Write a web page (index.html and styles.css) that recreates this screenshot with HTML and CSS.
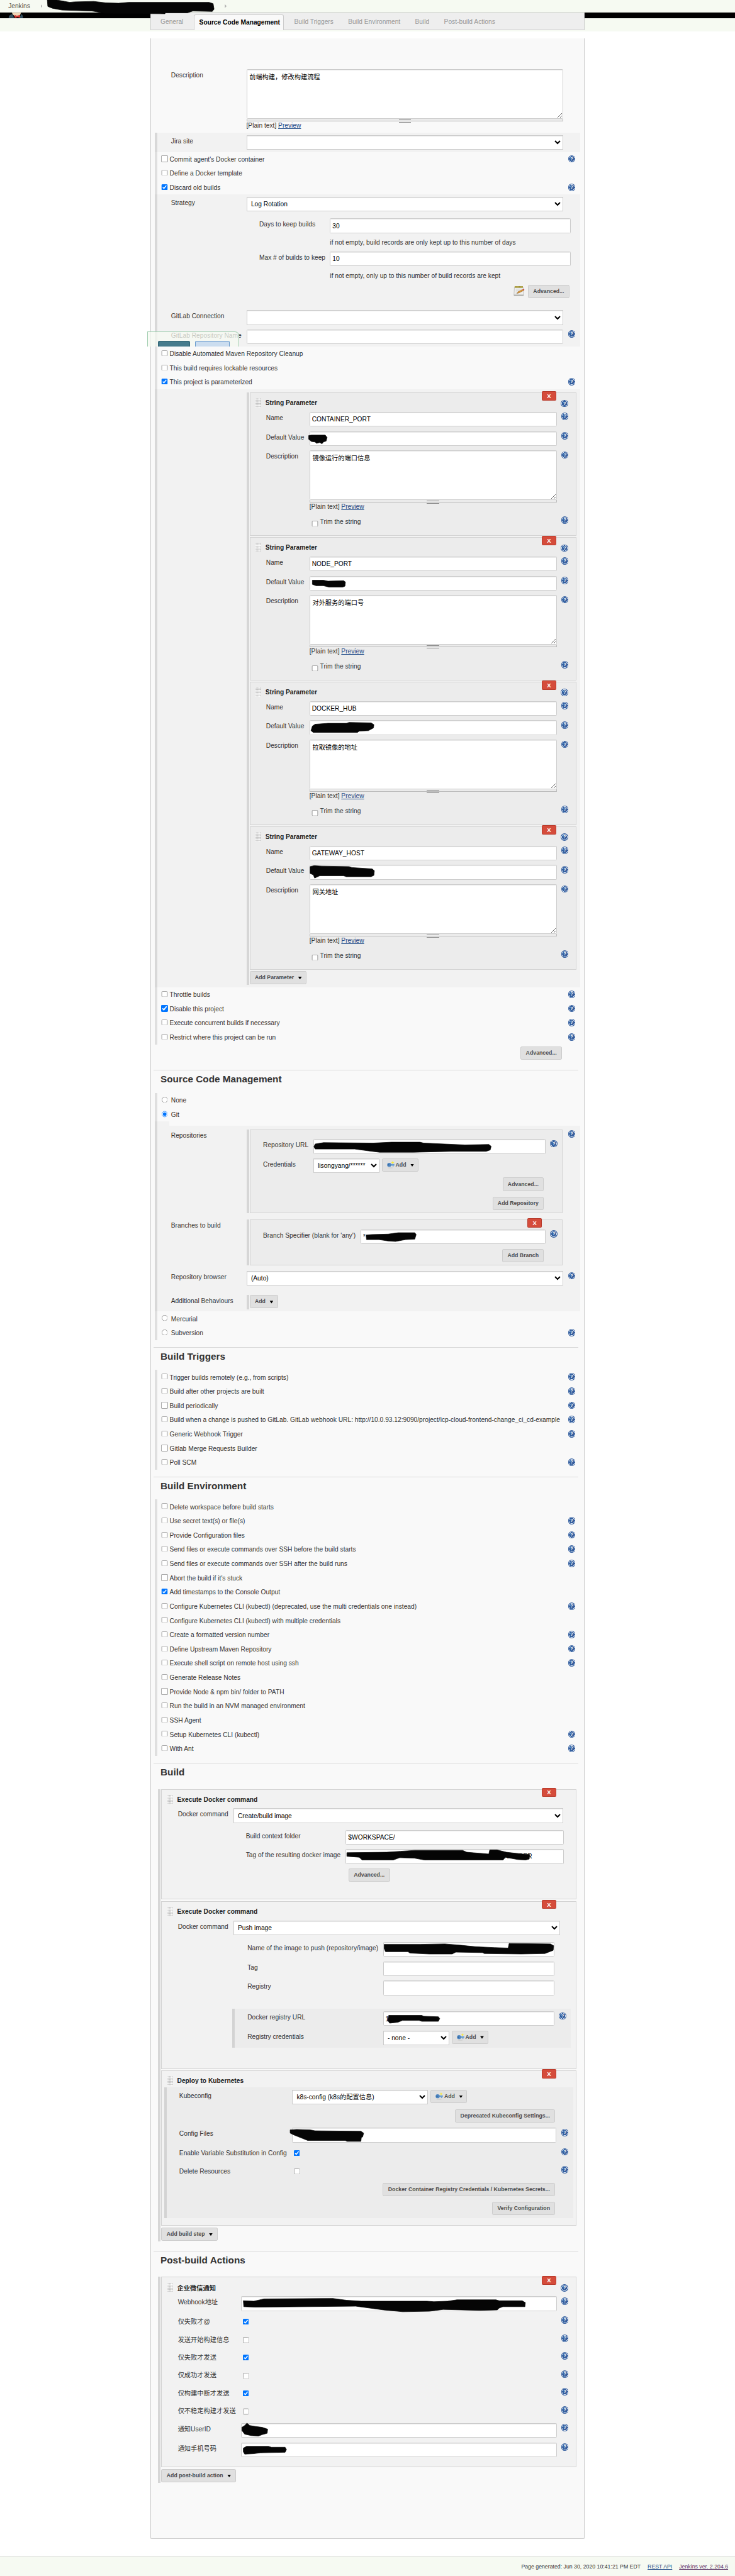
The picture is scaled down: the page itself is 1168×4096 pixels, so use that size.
FILE: index.html
```html
<!DOCTYPE html>
<html lang="en">
<head>
<meta charset="utf-8">
<title>Config [Jenkins]</title>
<link rel="stylesheet" href="styles.css">
</head>
<body>
<svg width="0" height="0" class="defs">
  <symbol id="key" viewBox="0 0 18 18">
    <ellipse cx="8" cy="16" rx="6" ry="1.2" fill="#cfcfcf"/>
    <path d="M8 7h9v4h-2v2h-2v-2H8z" fill="#6d9fd0"/>
    <circle cx="5" cy="9" r="4.6" fill="#4f86c0"/>
    <circle cx="3.6" cy="9" r="1.3" fill="#2d5f99"/>
    <path d="M13 0l1.200 2.600 2.800.9-2.800 1.200L13 7.500l-1.200-2.800-2.800-1.200 2.800-.9z" fill="#f7ea3c"/>
  </symbol>
</svg>
<div class="page">
  <header class="crumbs"><a>Jenkins</a><i class="sep"></i>
    <svg class="ink" width="600" height="32"><path d="M103 0L124 0L152 5L162 4L204 3L230 6L258 7L280 5L455 5L464 8L466 20L462 25L420 24L408 28L360 28L359 30L230 29L200 24L135 22L114 18L104 14Z"/></svg>
    <i class="sep sep2"></i>
  </header>
  <div class="band">
    <svg class="butler" width="34" height="12"><path d="M8 0h20l-2 5-4 3h-8l-4-4z" fill="#f0d6b7"/><path d="M1 12q0-7 8-9l4 9z" fill="#335061"/><path d="M32 12q1-5-3-9l-5 9z" fill="#335061"/><path d="M14 5l5 2 7-2v6l-6-1-6 2z" fill="#d33833"/></svg>
    <nav class="tabs"><a>General</a><a class="on">Source Code Management</a><a>Build Triggers</a><a>Build Environment</a><a>Build</a><a>Post-build Actions</a></nav>
  </div>

  <main class="panel">
    <div class="main plain">
      <div class="row desc"><span class="lbl">Description</span><div class="ctl"><textarea>前端构建，修改构建流程</textarea><div class="drag"></div><div class="plaintext">[Plain text] <a>Preview</a></div></div></div>
    </div>
    <div class="striped">
      <div class="body main">
        <div class="row"><span class="lbl">Jira site</span><div class="ctl"><select></select></div></div>
      </div>
      <div class="check"><input type="checkbox">Commit agent's Docker container<i class="help"></i></div>
      <div class="check"><input type="checkbox">Define a Docker template</div>
      <div class="check"><input type="checkbox" checked>Discard old builds<i class="help"></i></div>
      <div class="body main">
        <div class="row"><span class="lbl">Strategy</span><div class="ctl"><select><option>Log Rotation</option></select></div></div>
        <div class="rotation">
          <div class="row"><span class="lbl">Days to keep builds</span><div class="ctl"><input type="text" value="30"></div></div>
          <div class="hint">if not empty, build records are only kept up to this number of days</div>
          <div class="row"><span class="lbl">Max # of builds to keep</span><div class="ctl"><input type="text" value="10"></div></div>
          <div class="hint">if not empty, only up to this number of build records are kept</div>
        </div>
        <div class="actions adv1">
          <svg width="24" height="24" viewBox="0 0 24 24"><path d="M2 4h19l1 17H1z" fill="#efefed" stroke="#b5b5b0"/><path d="M1 20h21v2.500H1z" fill="#a8a8a4"/><path d="M2.500 1.500h18v3.500h-18z" fill="#b5a642"/><path d="M4 2v2M7 2v2M10 2v2M13 2v2M16 2v2M19 2v2" stroke="#6e6420"/><path d="M5 8h13M5 11h8M5 14h6M5 17h5" stroke="#c4c4c4"/><path d="M8 17l2-3.500L20 8.500l2 2.500-10 5z" fill="#dd9a3c" stroke="#8a5a1a" stroke-width=".7"/><path d="M20 8.500l2.500-1.200 1.300 2.200-1.800 1.500z" fill="#d43c3c"/></svg>
          <button>Advanced...</button>
        </div>
        <div class="row"><span class="lbl">GitLab Connection</span><div class="ctl"><select></select></div></div>
        <div class="row"><span class="lbl">GitLab Repository Name</span><div class="ctl"><input type="text"></div><i class="help"></i></div>
        <div class="savebar"><b></b><b class="apply"></b></div>
      </div>
      <div class="check"><input type="checkbox">Disable Automated Maven Repository Cleanup</div>
      <div class="check"><input type="checkbox">This build requires lockable resources</div>
      <div class="check"><input type="checkbox" checked>This project is parameterized<i class="help"></i></div>
      <div class="body">
        <div class="repeat params">
          <section class="chunk">
            <button class="del">X</button>
            <div class="head"><i class="grip"></i><b>String Parameter</b><i class="help"></i></div>
            <div class="row"><span class="lbl">Name</span><div class="ctl"><input type="text" value="CONTAINER_PORT"></div><i class="help"></i></div>
            <div class="row"><span class="lbl">Default Value</span><div class="ctl"><input type="text"><svg class="ink" width="60" height="32"><path d="M-2 9L4 8L34 8L38 13L36 21L30 23L27 27L22 24L15 26L12 23L4 22L-2 17Z"/></svg></div><i class="help"></i></div>
            <div class="row desc"><span class="lbl">Description</span><div class="ctl"><textarea>镜像运行的端口信息</textarea><div class="drag"></div><div class="plaintext">[Plain text] <a>Preview</a></div></div><i class="help"></i></div>
            <div class="row trim"><span class="lbl"></span><div class="ctl"><input type="checkbox">Trim the string</div><i class="help"></i></div>
          </section>
          <section class="chunk">
            <button class="del">X</button>
            <div class="head"><i class="grip"></i><b>String Parameter</b><i class="help"></i></div>
            <div class="row"><span class="lbl">Name</span><div class="ctl"><input type="text" value="NODE_PORT"></div><i class="help"></i></div>
            <div class="row"><span class="lbl">Default Value</span><div class="ctl"><input type="text"><svg class="ink" width="100" height="32"><path d="M6 9L30 9L40 11L74 10L78 13L77 22L72 24L42 24L30 21L14 21L6 18Z"/></svg></div><i class="help"></i></div>
            <div class="row desc"><span class="lbl">Description</span><div class="ctl"><textarea>对外服务的端口号</textarea><div class="drag"></div><div class="plaintext">[Plain text] <a>Preview</a></div></div><i class="help"></i></div>
            <div class="row trim"><span class="lbl"></span><div class="ctl"><input type="checkbox">Trim the string</div><i class="help"></i></div>
          </section>
          <section class="chunk">
            <button class="del">X</button>
            <div class="head"><i class="grip"></i><b>String Parameter</b><i class="help"></i></div>
            <div class="row"><span class="lbl">Name</span><div class="ctl"><input type="text" value="DOCKER_HUB"></div><i class="help"></i></div>
            <div class="row"><span class="lbl">Default Value</span><div class="ctl"><input type="text"><svg class="ink" width="160" height="32"><path d="M6 13L12 9L40 7L80 7L86 5L134 6L140 10L139 17L128 23L108 24L104 27L8 27L3 23Z"/></svg></div><i class="help"></i></div>
            <div class="row desc"><span class="lbl">Description</span><div class="ctl"><textarea>拉取镜像的地址</textarea><div class="drag"></div><div class="plaintext">[Plain text] <a>Preview</a></div></div><i class="help"></i></div>
            <div class="row trim"><span class="lbl"></span><div class="ctl"><input type="checkbox">Trim the string</div><i class="help"></i></div>
          </section>
          <section class="chunk">
            <button class="del">X</button>
            <div class="head"><i class="grip"></i><b>String Parameter</b><i class="help"></i></div>
            <div class="row"><span class="lbl">Name</span><div class="ctl"><input type="text" value="GATEWAY_HOST"></div><i class="help"></i></div>
            <div class="row"><span class="lbl">Default Value</span><div class="ctl"><input type="text"><svg class="ink" width="160" height="32"><path d="M1 4L10 2L26 3L86 4L92 6L136 9L141 13L140 23L134 26L80 26L74 24L22 24L11 29L8 22L1 19Z"/></svg></div><i class="help"></i></div>
            <div class="row desc"><span class="lbl">Description</span><div class="ctl"><textarea>网关地址</textarea><div class="drag"></div><div class="plaintext">[Plain text] <a>Preview</a></div></div><i class="help"></i></div>
            <div class="row trim"><span class="lbl"></span><div class="ctl"><input type="checkbox">Trim the string</div><i class="help"></i></div>
          </section>
          <button>Add Parameter<i class="caret"></i></button>
        </div>
      </div>
      <div class="check"><input type="checkbox">Throttle builds<i class="help"></i></div>
      <div class="check"><input type="checkbox" checked>Disable this project<i class="help"></i></div>
      <div class="check"><input type="checkbox">Execute concurrent builds if necessary<i class="help"></i></div>
      <div class="check"><input type="checkbox">Restrict where this project can be run<i class="help"></i></div>
    </div>
    <div class="actions adv2"><button>Advanced...</button></div>

    <h2>Source Code Management</h2>
    <div class="striped">
      <div class="check radio"><input type="radio" name="scm">None</div>
      <div class="check radio"><input type="radio" name="scm" checked>Git</div>
      <div class="body main git">
        <div class="notch"></div>
        <div class="row repos"><span class="lbl">Repositories</span>
          <div class="ctl"><div class="repeat"><section class="chunk">
            <div class="row"><span class="lbl">Repository URL</span><div class="ctl"><input type="text"><svg class="ink" width="420" height="32"><path d="M4 11L22 8L130 9L170 7L232 7L240 9L330 13L382 12L387 16L385 24L376 27L300 27L218 29L144 29L120 26L90 22L4 22L1 17Z"/></svg></div><i class="help"></i></div>
            <div class="row"><span class="lbl">Credentials</span><div class="ctl pair"><select class="cred"><option>lisongyang/******</option></select><button class="add"><svg width="17" height="17"><use href="#key"/></svg>Add<i class="caret"></i></button></div></div>
            <div class="actions"><button>Advanced...</button></div>
            <div class="actions"><button>Add Repository</button></div>
          </section></div></div><i class="help"></i></div>
        <div class="row branches"><span class="lbl">Branches to build</span>
          <div class="ctl"><div class="repeat"><section class="chunk">
            <button class="del">X</button>
            <div class="row"><span class="lbl">Branch Specifier (blank for 'any')</span><div class="ctl"><input type="text" value="*"><svg class="ink" width="140" height="32"><path d="M12 12L24 11L60 10L82 7L118 7L121 11L118 21L98 22L76 26L60 25L40 22L13 22Z"/></svg></div><i class="help"></i></div>
            <div class="actions"><button>Add Branch</button></div>
          </section></div></div></div>
        <div class="row"><span class="lbl">Repository browser</span><div class="ctl"><select><option>(Auto)</option></select></div><i class="help"></i></div>
        <div class="row behaviours"><span class="lbl">Additional Behaviours</span><div class="repeat"><button>Add<i class="caret"></i></button></div></div>
      </div>
      <div class="check radio"><input type="radio" name="scm">Mercurial</div>
      <div class="check radio"><input type="radio" name="scm">Subversion<i class="help"></i></div>
    </div>

    <h2 class="gap">Build Triggers</h2>
    <div class="striped">
      <div class="check"><input type="checkbox">Trigger builds remotely (e.g., from scripts)<i class="help"></i></div>
      <div class="check"><input type="checkbox">Build after other projects are built<i class="help"></i></div>
      <div class="check"><input type="checkbox">Build periodically<i class="help"></i></div>
      <div class="check"><input type="checkbox">Build when a change is pushed to GitLab. GitLab webhook URL: http://10.0.93.12:9090/project/icp-cloud-frontend-change_ci_cd-example<i class="help"></i></div>
      <div class="check"><input type="checkbox">Generic Webhook Trigger<i class="help"></i></div>
      <div class="check"><input type="checkbox">Gitlab Merge Requests Builder</div>
      <div class="check"><input type="checkbox">Poll SCM<i class="help"></i></div>
    </div>

    <h2 class="gap">Build Environment</h2>
    <div class="striped">
      <div class="check"><input type="checkbox">Delete workspace before build starts</div>
      <div class="check"><input type="checkbox">Use secret text(s) or file(s)<i class="help"></i></div>
      <div class="check"><input type="checkbox">Provide Configuration files<i class="help"></i></div>
      <div class="check"><input type="checkbox">Send files or execute commands over SSH before the build starts<i class="help"></i></div>
      <div class="check"><input type="checkbox">Send files or execute commands over SSH after the build runs<i class="help"></i></div>
      <div class="check"><input type="checkbox">Abort the build if it's stuck</div>
      <div class="check"><input type="checkbox" checked>Add timestamps to the Console Output</div>
      <div class="check"><input type="checkbox">Configure Kubernetes CLI (kubectl) (deprecated, use the multi credentials one instead)<i class="help"></i></div>
      <div class="check"><input type="checkbox">Configure Kubernetes CLI (kubectl) with multiple credentials</div>
      <div class="check"><input type="checkbox">Create a formatted version number<i class="help"></i></div>
      <div class="check"><input type="checkbox">Define Upstream Maven Repository<i class="help"></i></div>
      <div class="check"><input type="checkbox">Execute shell script on remote host using ssh<i class="help"></i></div>
      <div class="check"><input type="checkbox">Generate Release Notes</div>
      <div class="check"><input type="checkbox">Provide Node &amp; npm bin/ folder to PATH</div>
      <div class="check"><input type="checkbox">Run the build in an NVM managed environment</div>
      <div class="check"><input type="checkbox">SSH Agent</div>
      <div class="check"><input type="checkbox">Setup Kubernetes CLI (kubectl)<i class="help"></i></div>
      <div class="check"><input type="checkbox">With Ant<i class="help"></i></div>
    </div>

    <h2 class="gap tall">Build</h2>
    <div class="repeat steps">
      <section class="chunk step1">
        <button class="del">X</button>
        <div class="head"><i class="grip"></i><b>Execute Docker command</b></div>
        <div class="row cmd"><span class="lbl">Docker command</span><div class="ctl"><select><option>Create/build image</option></select></div></div>
        <div class="nested">
          <div class="row"><span class="lbl">Build context folder</span><div class="ctl"><input type="text" value="$WORKSPACE/"></div></div>
          <div class="row"><span class="lbl">Tag of the resulting docker image</span><div class="ctl"><input type="text"><span class="peek">NUMBER</span><svg class="ink" width="474" height="32"><path d="M3 8L90 7L120 5L150 3L255 3L264 7L312 11L314 2L330 2L350 7L385 11L401 12L400 22L392 24L375 23L348 18L343 24L172 24L150 20L118 19L104 24L36 24L30 18L3 16Z"/></svg></div></div>
          <div class="actions left"><button>Advanced...</button></div>
        </div>
      </section>
      <section class="chunk step2">
        <button class="del">X</button>
        <div class="head"><i class="grip"></i><b>Execute Docker command</b></div>
        <div class="row cmd"><span class="lbl">Docker command</span><div class="ctl"><select><option>Push image</option></select></div></div>
        <div class="nested">
          <div class="row"><span class="lbl">Name of the image to push (repository/image)</span><div class="ctl"><input type="text"><svg class="ink" width="373" height="32"><path d="M2 5L80 5L134 4L170 7L200 10L242 12L272 13L274 3L364 4L371 8L370 18L352 25L300 26L220 25L216 23L158 22L150 26L100 26L58 24L54 21L5 21L2 14Z"/></svg></div></div>
          <div class="row"><span class="lbl">Tag</span><div class="ctl"><input type="text"></div></div>
          <div class="row"><span class="lbl">Registry</span><div class="ctl"><input type="text"></div></div>
          <div class="registry">
            <div class="row"><span class="lbl">Docker registry URL</span><div class="ctl"><input type="text" value="1"><svg class="ink" width="140" height="32"><path d="M12 9L84 9L88 11L120 12L123 16L120 22L84 22L78 20L42 20L32 24L14 26L10 20Z"/></svg></div><i class="help"></i></div>
            <div class="row"><span class="lbl">Registry credentials</span><div class="ctl pair"><select class="cred"><option>- none -</option></select><button class="add"><svg width="17" height="17"><use href="#key"/></svg>Add<i class="caret"></i></button></div></div>
          </div>
        </div>
      </section>
      <section class="chunk step3">
        <button class="del">X</button>
        <div class="head"><i class="grip"></i><b>Deploy to Kubernetes</b></div>
        <div class="kube">
          <div class="row"><span class="lbl">Kubeconfig</span><div class="ctl pair"><select class="kubesel"><option>k8s-config (k8s的配置信息)</option></select><button class="add"><svg width="17" height="17"><use href="#key"/></svg>Add<i class="caret"></i></button></div></div>
          <div class="actions"><button>Deprecated Kubeconfig Settings...</button></div>
          <div class="row"><span class="lbl">Config Files</span><div class="ctl"><input type="text"><svg class="ink" width="180" height="34"><path d="M-4 5L10 4L40 5L50 7L150 8L156 12L154 20L151 22L150 30L120 30L116 28L34 28L24 24L4 16L-4 12Z"/></svg></div><i class="help"></i></div>
          <div class="row tick"><span class="lbl">Enable Variable Substitution in Config</span><div class="ctl"><input type="checkbox" checked></div><i class="help"></i></div>
          <div class="row tick"><span class="lbl">Delete Resources</span><div class="ctl"><input type="checkbox"></div><i class="help"></i></div>
          <div class="actions"><button>Docker Container Registry Credentials / Kubernetes Secrets...</button></div>
          <div class="actions"><button>Verify Configuration</button></div>
        </div>
      </section>
      <button>Add build step<i class="caret"></i></button>
    </div>

    <h2 class="gap2 tall">Post-build Actions</h2>
    <div class="repeat steps">
      <section class="chunk post">
        <button class="del">X</button>
        <div class="head"><i class="grip"></i><b>企业微信通知</b><i class="help"></i></div>
        <div class="row"><span class="lbl">Webhook地址</span><div class="ctl"><input type="text"><svg class="ink" width="640" height="36"><path d="M5 10L28 11L50 6L200 5L230 9L262 11L405 11L420 12L450 11L470 8L555 8L562 10L612 10L619 14L618 23L570 23L562 26L558 30L520 31L440 29L410 33L352 34L310 30L250 22L30 24L6 23Z"/></svg></div><i class="help"></i></div>
        <div class="row tick"><span class="lbl">仅失败才@</span><div class="ctl"><input type="checkbox" checked></div><i class="help"></i></div>
        <div class="row tick"><span class="lbl">发送开始构建信息</span><div class="ctl"><input type="checkbox"></div><i class="help"></i></div>
        <div class="row tick"><span class="lbl">仅失败才发送</span><div class="ctl"><input type="checkbox" checked></div><i class="help"></i></div>
        <div class="row tick"><span class="lbl">仅成功才发送</span><div class="ctl"><input type="checkbox"></div><i class="help"></i></div>
        <div class="row tick"><span class="lbl">仅构建中断才发送</span><div class="ctl"><input type="checkbox" checked></div><i class="help"></i></div>
        <div class="row tick"><span class="lbl">仅不稳定构建才发送</span><div class="ctl"><input type="checkbox"></div><i class="help"></i></div>
        <div class="row"><span class="lbl">通知UserID</span><div class="ctl"><input type="text"><svg class="ink" width="80" height="34"><path d="M2 9L8 5L13 0L19 5L30 7L46 9L58 13L57 22L46 25L38 28L22 27L8 24L2 16Z"/></svg></div><i class="help"></i></div>
        <div class="row"><span class="lbl">通知手机号码</span><div class="ctl"><input type="text"><svg class="ink" width="120" height="34"><path d="M5 12L12 8L60 8L66 10L96 10L99 15L96 21L42 22L28 24L8 25L5 20Z"/></svg></div><i class="help"></i></div>
      </section>
      <button>Add post-build action<i class="caret"></i></button>
    </div>
  </main>

  <footer>Page generated: Jun 30, 2020 10:41:21 PM EDT <a>REST API</a> <a class="ver">Jenkins ver. 2.204.6</a></footer>
</div>
</body>
</html>
```
FILE: styles.css
```css
* { box-sizing: border-box; }
html, body { margin: 0; background: #fff; }
body { font-family: "Liberation Sans", Arial, "Noto Sans CJK SC", sans-serif; overflow-x: hidden; }
.defs { position: absolute; }

/* The form is measured on a 1600px wide sheet */
.page { zoom: 0.73; width: 1600px; height: 5611px; font-size: 14px; color: #333; display: flex; flex-direction: column; }

.crumbs { position: relative; z-index: 2; height: 28px; flex: none; display: flex; align-items: center; padding-left: 18px; background: #f6faf2; border-bottom: 1px solid #d3d7cf; color: #4d4d4d; }
.sep { width: 4px; height: 8px; margin-left: 23px; background: #b3b3b3; clip-path: polygon(0 0, 100% 50%, 0 100%); }
.sep2 { margin-left: 397px; }
.ink { position: absolute; left: 0; top: 0; overflow: visible; fill: #050505; stroke: #050505; stroke-width: 1; stroke-linejoin: round; z-index: 3; pointer-events: none; }

.band { height: 40px; flex: none; display: flex; background: linear-gradient(#000 12px, #f6faf2 12px); }
.butler { flex: none; margin-left: 18px; }
.tabs { margin-left: 276px; width: 945px; height: 38px; display: flex; background: #eee; border: 1px solid #ccc; border-top: 0; color: #999; line-height: 40px; }
.tabs a { padding: 0 16px; white-space: nowrap; }
.tabs a:first-child { padding: 0 22px 0 20px; width: 92px; }
.tabs .on { width: 197px; margin: 3px 6px -1px 0; padding: 0 11px; background: #f9f9f9; border: 1px solid #ccc; border-bottom: 0; border-radius: 4px 4px 0 0; font-weight: bold; color: #000; line-height: 33px; }

.panel { margin: 15px 0 0 328px; width: 945px; height: 5447px; flex: none; padding-left: 8px; background: #f9f9f9; border: 1px solid #ccc; border-top: 0; border-radius: 0 0 3px 3px; }
.striped, .plain { width: 925px; border-left: 5.500px solid #dfdfdf; }
.plain { border-color: transparent; padding: 63px 0 0; height: 206px; }
.body { position: relative; background: #f2f2f2; margin-left: -1px; padding-left: 1px; }
.body::before { content: ""; position: absolute; left: -4.500px; top: 0; bottom: 0; width: 5.500px; background: #d8d8d8; }

/* label, control, help */
.row { display: flex; height: 42px; padding-top: 5px; padding-left: var(--p); }
.lbl { flex: none; width: var(--l); line-height: 28px; white-space: nowrap; }
.ctl { flex: none; position: relative; width: var(--c); height: 32px; }
.main { --p: 29.500px; --l: 164px; --c: 690px; }
.ctl > input[type=text], .ctl > select { display: block; width: 100%; height: 32px; margin: 0; border: 1px solid #ccc; border-radius: 2px; background: #fff; box-shadow: inset 0 1px 1px rgba(0,0,0,.12); font: 14px "Liberation Sans", Arial, "Noto Sans CJK SC", sans-serif; color: #000; padding: 1px 4px 0; }
.ctl > select { border-radius: 0; padding: 0 0 0 6px; }
textarea { display: block; width: 100%; height: 108px; margin: 0; padding: 7px 5px; border: 1px solid #ccc; border-radius: 2px; box-shadow: inset 0 1px 1px rgba(0,0,0,.12); font: 14px/18px "Liberation Sans", Arial, "Noto Sans CJK SC", sans-serif; color: #000; resize: vertical; }
.drag { height: 6px; border: solid #bbb; border-width: 0 1px 1px; background: #ebebeb; display: flex; justify-content: center; }
.drag::before { content: ""; width: 27px; height: 4px; margin-top: 1px; border: solid #888; border-width: 1px 0; }
.plaintext { line-height: 19px; white-space: nowrap; }
.plaintext a, footer a { color: #204a87; text-decoration: underline; }

.help { flex: none; width: 16px; height: 16px; margin: 2px 0 0 10px; border-radius: 50%; background: radial-gradient(circle, #345f9f 0 5.600px, #dbe5f2 5.900px 6.500px, #345f9f 6.900px); color: #fff; font: bold 11px/16px "Liberation Sans", Arial, sans-serif; text-align: center; }
.help::before { content: "?"; }

.check { display: flex; align-items: center; height: 31px; padding: 1px 10px 0 8.500px; white-space: nowrap; }
.check input { width: 14px; height: 14px; margin: -2px 4px 0 0; }
.check .help { margin: -2px 0 0 auto; }
.check.radio input { margin: -2px 6px 0 1px; }

button { display: inline-flex; align-items: center; height: 29px; padding: 0 10px 1px; margin: 0; border: 1px solid #ccc; border-radius: 3px; background: #e0e0e0; color: #4d4d4d; font: bold 12px "Liberation Sans", Arial, sans-serif; white-space: nowrap; }
.caret { width: 8px; height: 6px; margin: 3px -1px 0 9px; background: #000; clip-path: polygon(0 0, 100% 0, 50% 100%); }
.add svg { margin: 2px 2px 0 0; }
.add { margin-left: 6px; padding: 0 9px 2px; height: 29px; }
.pair { display: flex; }
.ctl > .cred { width: 144px; flex: none; }
.ctl > .kubesel { width: 296px; flex: none; }
.actions { display: flex; justify-content: flex-end; height: 42px; padding-top: 5px; }

.rotation { --l: 154px; --c: 524px; --p: 0; margin: 5px 0 0 221.500px; }
.hint { height: 30px; line-height: 32px; padding-left: 154px; white-space: nowrap; }
.adv1 { height: 56px; padding-right: 23px; gap: 7px; align-items: flex-start; }
.adv1 svg { margin-top: 2px; }
.savebar { position: absolute; left: -22px; bottom: 0; width: 201px; height: 33px; display: flex; gap: 11px; align-items: flex-end; padding-left: 23px; background: rgba(246,250,242,.75); border: 1px solid #a3cfb2; border-bottom: 0; border-radius: 0 9px 0 0; }
.savebar b { width: 70px; height: 12px; background: #467b8c; border: 1px solid #2f6272; border-bottom: 0; border-radius: 3px 3px 0 0; }
.savebar .apply { width: 75px; background: #cbddef; border-color: #6699cc; }

.repeat { border-left: 5.500px solid #d6d6d6; padding-left: 1.500px; }
.chunk { position: relative; border: 1px solid #d3d3d3; margin-bottom: 3px; background: #ececec; }
.del { position: absolute; right: 43px; top: -4px; width: 32px; height: 20px; justify-content: center; padding: 0; background: #d54c3b; border-color: #b83a2b; border-radius: 2px; color: #fff; font-size: 13px; }
.head { display: flex; height: 36px; align-items: center; padding: 7px 0 0 12px; color: #222; }
.grip { width: 12px; height: 20px; margin-right: 9px; background: radial-gradient(circle at 1.500px 1.500px, #aaa .9px, #fff 1.200px) 0 0 / 3px 3.300px; }
.head .help { margin: 2px 17px 0 auto; }

.body > .params { margin-left: 193.500px; width: 719px; padding-bottom: 2px; }
.body:has(> .params) { padding-top: 7px; padding-bottom: 5px; }
.params .chunk { height: 312px; --p: 34.500px; --l: 94.500px; --c: 538px; }
.params .desc { height: 142px; }
.params .trim .ctl { display: flex; line-height: 27px; }
.trim input { width: 14px; height: 14px; margin: 11px 4px 0 5px; }

.adv2 { width: 886px; height: 56px; }
h2 { margin: 0 0 0 -3px; width: 924px; height: 50px; border-top: 1px solid #d9d9d9; padding-left: 15px; font-size: 21px; line-height: 39px; color: #333; }
h2.gap { margin-top: 15.400px; }
h2.gap2 { margin-top: 20px; }
h2.tall { height: 57px; }

.git .notch { height: 10px; margin-left: 25px; background: #f9f9f9; }
.git .repeat { width: 688px; }
.repos, .branches { padding-top: 7px; height: 197px; }
.branches { height: 114px; }
.git .chunk .row { --p: 28px; }
.repos .chunk { height: 183px; padding-top: 15px; --l: 109px; --c: 506px; }
.branches .chunk { height: 100px; padding-top: 15px; --l: 212px; --c: 403px; }
.git .chunk .actions { padding-right: 39px; }
.behaviours { padding-top: 15px; height: 51px; }
.git .behaviours .repeat { height: 31px; width: 70px; }

.steps { margin-left: 7px; width: 911px; padding-bottom: 2px; }
.steps .chunk { background: #f2f2f2; }
.step1 { height: 241px; }
.step2 { height: 366px; }
.step3 { height: 339px; }
.cmd { --p: 34.500px; --l: 120.500px; --c: 718px; }
.step2 .cmd { --c: 711px; }
.step1 .nested { --p: 182.500px; --l: 217.500px; --c: 475px; padding-top: 5px; }
.left { justify-content: flex-start; padding-left: 406px; }
.step2 .nested { --p: 186px; --l: 295px; --c: 373px; padding-top: 5px; }
.registry { margin: 25px 0 0 153px; width: 737px; height: 84px; --p: 27.500px; background: #ececec; border-left: 5.500px solid #d3d3d3; }
.kube { margin-left: 5px; width: 890px; height: 285px; --p: 27px; --l: 245.500px; --c: 576px; background: #ececec; border-left: 5.500px solid #d3d3d3; }
.kube .actions { padding-right: 39px; height: 41px; }
.kube .tick { height: 39px; }
.tick input { width: 14px; height: 14px; margin: 7px 0 0 4px; display: block; }
.post { height: 415px; --p: 34.500px; --l: 137px; --c: 687.500px; }
.post .tick { height: 39px; }
.peek { position: absolute; left: 345px; top: 8px; color: #000; }

footer { margin-top: 38px; height: 43px; background: #f6faf2; border-top: 1px solid #d3d7cf; display: flex; justify-content: flex-end; align-items: center; gap: 15px; padding-right: 15px; font-size: 12px; }
footer .ver { color: #5c3566; }
```
